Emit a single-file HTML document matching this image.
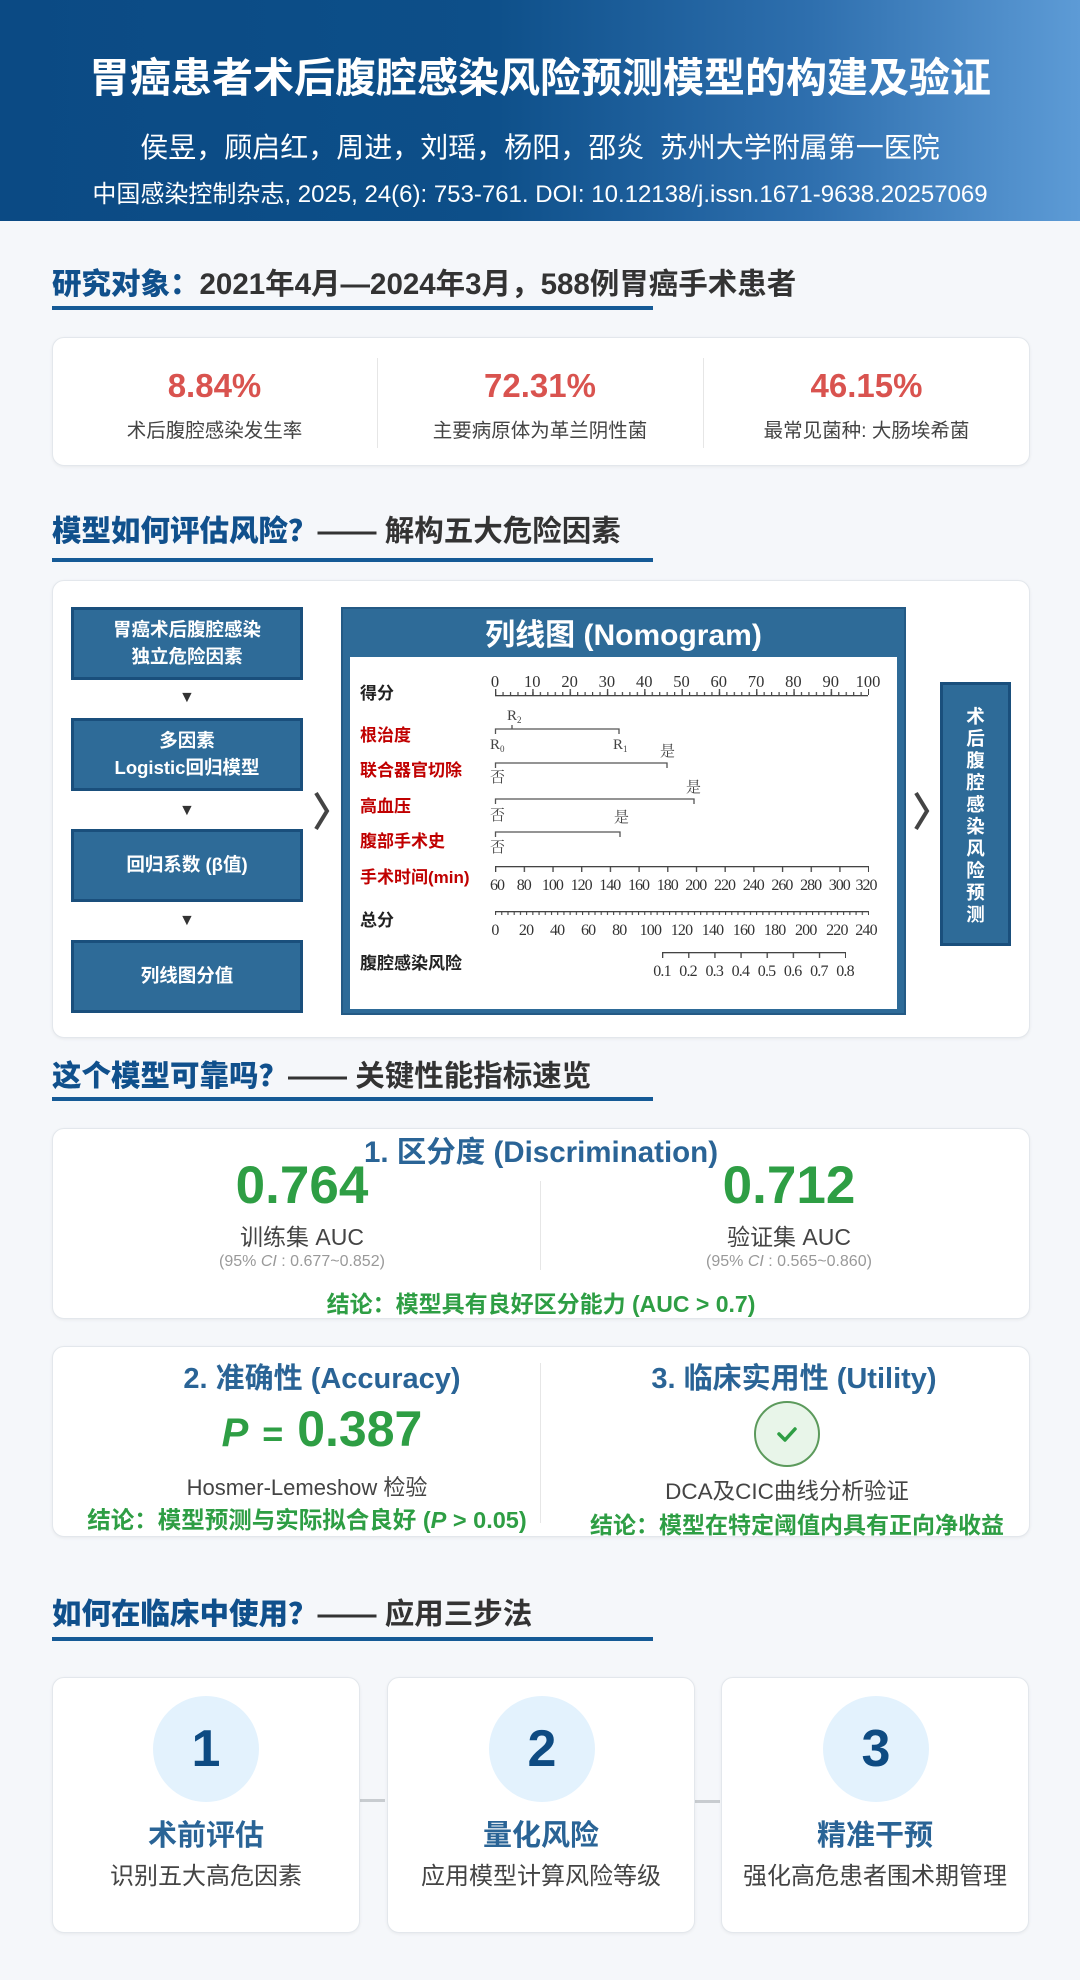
<!DOCTYPE html>
<html><head><meta charset="utf-8">
<style>
*{margin:0;padding:0;box-sizing:border-box}
body{width:1080px;height:1980px;background:#f5f7fa;font-family:"Liberation Sans","Noto Sans CJK SC",sans-serif;position:relative;overflow:hidden;color:#333}
.a{position:absolute}
.c{text-align:center}
.hdr{left:0;top:0;width:1080px;height:221px;background:linear-gradient(90deg,#0b4a84 0%,#0d4f89 45%,#2e6fae 75%,#5d9bd6 100%)}
.st{left:52px;font-size:29.5px;font-weight:bold;color:#333;white-space:nowrap}
.st b{color:#10508c}
.ul{left:52px;width:601px;height:4px;background:#155a96}
.card{background:#fff;border:1px solid #e3e7ec;border-radius:12px;box-shadow:0 1px 3px rgba(0,0,0,.06)}
.red{color:#d9534f;font-size:33px;font-weight:bold}
.lb{font-size:19.5px;color:#444}
.box{left:71px;width:232px;height:73px;background:#2e6b98;border:3px solid #1a4f7c;color:#fff;font-weight:bold;font-size:18.5px;display:flex;align-items:center;justify-content:center;text-align:center;line-height:1.45}
.tri{left:179px;font-size:16px;color:#333}
.g{color:#2e9e44;font-weight:bold}
.bt{color:#2a6496;font-weight:bold;font-size:29px}
.sc{width:308px;height:256px;top:1677px}
.circ{width:106px;height:106px;border-radius:50%;background:#e3f2fd;color:#0e4b82;font-size:52px;font-weight:bold;display:flex;align-items:center;justify-content:center}
</style></head><body>
<div class="a hdr"></div>
<div class="a c" style="left:0;width:1080px;top:44px;font-size:41px;font-weight:bold;color:#fff;white-space:nowrap">胃癌患者术后腹腔感染风险预测模型的构建及验证</div>
<div class="a c" style="left:0;width:1080px;top:126px;font-size:28px;color:#fff;white-space:nowrap">侯昱，顾启红，周进，刘瑶，杨阳，邵炎&nbsp;&nbsp;苏州大学附属第一医院</div>
<div class="a c" style="left:0;width:1080px;top:174px;font-size:24px;color:#fff;white-space:nowrap">中国感染控制杂志, 2025, 24(6): 753-761. DOI: 10.12138/j.issn.1671-9638.20257069</div>

<div class="a st" style="top:261px"><b>研究对象：</b>2021年4月—2024年3月，588例胃癌手术患者</div>
<div class="a ul" style="top:306px"></div>
<div class="a card" style="left:52px;top:337px;width:978px;height:129px"></div>
<div class="a" style="left:377px;top:358px;width:1px;height:90px;background:#e6e6e6"></div>
<div class="a" style="left:703px;top:358px;width:1px;height:90px;background:#e6e6e6"></div>
<div class="a c red" style="left:52px;width:325px;top:367px">8.84%</div>
<div class="a c lb" style="left:52px;width:325px;top:414px">术后腹腔感染发生率</div>
<div class="a c red" style="left:377px;width:326px;top:367px">72.31%</div>
<div class="a c lb" style="left:377px;width:326px;top:414px">主要病原体为革兰阴性菌</div>
<div class="a c red" style="left:703px;width:327px;top:367px">46.15%</div>
<div class="a c lb" style="left:703px;width:327px;top:414px">最常见菌种: 大肠埃希菌</div>

<div class="a st" style="top:508px"><b>模型如何评估风险？</b>—— 解构五大危险因素</div>
<div class="a ul" style="top:558px"></div>
<div class="a card" style="left:52px;top:580px;width:978px;height:458px"></div>
<div class="a box" style="top:607px">胃癌术后腹腔感染<br>独立危险因素</div>
<div class="a tri" style="top:689px">▼</div>
<div class="a box" style="top:718px">多因素<br>Logistic回归模型</div>
<div class="a tri" style="top:802px">▼</div>
<div class="a box" style="top:829px">回归系数 (β值)</div>
<div class="a tri" style="top:912px">▼</div>
<div class="a box" style="top:940px">列线图分值</div>
<svg class="a" style="left:312px;top:790px" width="20" height="42"><path d="M4 3 L15 21 L4 39" fill="none" stroke="#444" stroke-width="4"/></svg>
<svg class="a" style="left:912px;top:790px" width="20" height="42"><path d="M4 3 L15 21 L4 39" fill="none" stroke="#444" stroke-width="4"/></svg>
<div class="a" style="left:341px;top:607px;width:565px;height:408px;background:#2e6b98;border:2px solid #245a85"></div>
<div class="a c" style="left:341px;width:565px;top:610px;font-size:30px;font-weight:bold;color:#fff">列线图 (Nomogram)</div>
<div class="a" style="left:350px;top:657px;width:547px;height:352px;background:#fff"></div>
<div class="a" style="left:940px;top:682px;width:71px;height:264px;background:#2e6b98;border:3px solid #1a4f7c;color:#fff;font-weight:bold;font-size:18.5px;line-height:22px;text-align:center;padding-top:21px">术<br>后<br>腹<br>腔<br>感<br>染<br>风<br>险<br>预<br>测</div>

<svg class="a" style="left:350px;top:657px" width="547" height="352" viewBox="350 657 547 352">
<defs>
<pattern id="p1" x="495" y="0" width="7.46" height="10" patternUnits="userSpaceOnUse"><rect x="0" y="0" width="1.2" height="10" fill="#444"/></pattern>
<pattern id="p2" x="495" y="0" width="37.3" height="10" patternUnits="userSpaceOnUse"><rect x="0" y="0" width="1.3" height="10" fill="#444"/></pattern>
<pattern id="p3" x="495" y="0" width="28.69" height="10" patternUnits="userSpaceOnUse"><rect x="0" y="0" width="1.3" height="10" fill="#444"/></pattern>
<pattern id="p4" x="495" y="0" width="6.216" height="10" patternUnits="userSpaceOnUse"><rect x="0" y="0" width="1.1" height="10" fill="#444"/></pattern>
<pattern id="p5" x="662" y="0" width="26.14" height="10" patternUnits="userSpaceOnUse"><rect x="0" y="0" width="1.3" height="10" fill="#444"/></pattern>
</defs>
<g font-family="Liberation Sans,Noto Sans CJK SC,sans-serif" font-weight="bold" font-size="17">
<text x="360" y="699" fill="#222">得分</text>
<text x="360" y="741" fill="#c00000">根治度</text>
<text x="360" y="776" fill="#c00000">联合器官切除</text>
<text x="360" y="812" fill="#c00000">高血压</text>
<text x="360" y="847" fill="#c00000">腹部手术史</text>
<text x="360" y="883" fill="#c00000">手术时间(min)</text>
<text x="360" y="926" fill="#222">总分</text>
<text x="360" y="969" fill="#222">腹腔感染风险</text>
</g>
<rect x="495" y="695" width="373" height="1.3" fill="#444"/>
<rect x="495" y="692" width="374" height="3" fill="url(#p1)"/>
<rect x="495" y="689" width="374" height="6" fill="url(#p2)"/>
<g font-family="Liberation Serif,serif" font-size="16.5" fill="#333" text-anchor="middle">
<text x="495" y="687">0</text><text x="532.3" y="687">10</text><text x="569.6" y="687">20</text><text x="606.9" y="687">30</text><text x="644.2" y="687">40</text><text x="681.5" y="687">50</text><text x="718.8" y="687">60</text><text x="756.1" y="687">70</text><text x="793.4" y="687">80</text><text x="830.7" y="687">90</text><text x="868" y="687">100</text>
</g>
<g fill="none" stroke="#555" stroke-width="1.3">
<path d="M495.5 734 V729 H619 V734 M512 729 V725"/>
<path d="M495.5 768 V763 H667 V768"/>
<path d="M495.5 804 V799 H694 V804"/>
<path d="M495.5 837 V832 H620 V837"/>
</g>
<g font-family="Liberation Serif,Noto Serif CJK SC,serif" font-size="15" fill="#444">
<text x="507" y="720">R<tspan font-size="9" dy="3">2</tspan></text>
<text x="490" y="749">R<tspan font-size="9" dy="3">0</tspan></text>
<text x="613" y="749">R<tspan font-size="9" dy="3">1</tspan></text>
<text x="660" y="756">是</text><text x="490" y="782">否</text>
<text x="686" y="792">是</text><text x="490" y="820">否</text>
<text x="614" y="822">是</text><text x="490" y="852">否</text>
</g>
<rect x="495" y="866" width="373" height="1.3" fill="#444"/>
<rect x="495" y="866" width="374" height="6" fill="url(#p3)"/>
<g font-family="Liberation Serif,serif" font-size="16" fill="#333" text-anchor="middle" letter-spacing="-1">
<text x="497" y="890">60</text><text x="523.7" y="890">80</text><text x="552.4" y="890">100</text><text x="581.1" y="890">120</text><text x="609.8" y="890">140</text><text x="638.5" y="890">160</text><text x="667.2" y="890">180</text><text x="695.8" y="890">200</text><text x="724.5" y="890">220</text><text x="753.2" y="890">240</text><text x="781.9" y="890">260</text><text x="810.6" y="890">280</text><text x="839.3" y="890">300</text><text x="866" y="890">320</text>
</g>
<rect x="495" y="911" width="373" height="1.3" fill="#444"/>
<rect x="495" y="911" width="374" height="4" fill="url(#p4)"/>
<g font-family="Liberation Serif,serif" font-size="16" fill="#333" text-anchor="middle" letter-spacing="-0.8">
<text x="495" y="935">0</text><text x="526.1" y="935">20</text><text x="557.2" y="935">40</text><text x="588.2" y="935">60</text><text x="619.3" y="935">80</text><text x="650.4" y="935">100</text><text x="681.5" y="935">120</text><text x="712.6" y="935">140</text><text x="743.6" y="935">160</text><text x="774.7" y="935">180</text><text x="805.8" y="935">200</text><text x="836.9" y="935">220</text><text x="866" y="935">240</text>
</g>
<rect x="662" y="952" width="183" height="1.3" fill="#444"/>
<rect x="662" y="952" width="184" height="6" fill="url(#p5)"/>
<g font-family="Liberation Serif,serif" font-size="16" fill="#333" text-anchor="middle" letter-spacing="-0.8">
<text x="662" y="976">0.1</text><text x="688.1" y="976">0.2</text><text x="714.3" y="976">0.3</text><text x="740.4" y="976">0.4</text><text x="766.6" y="976">0.5</text><text x="792.7" y="976">0.6</text><text x="818.9" y="976">0.7</text><text x="845" y="976">0.8</text>
</g>
</svg>

<div class="a st" style="top:1053px"><b>这个模型可靠吗？</b>—— 关键性能指标速览</div>
<div class="a ul" style="top:1097px"></div>
<div class="a card" style="left:52px;top:1128px;width:978px;height:191px"></div>
<div class="a" style="left:540px;top:1181px;width:1px;height:89px;background:#e6e6e6"></div>
<div class="a c bt" style="left:52px;width:978px;top:1129px;font-size:29.5px">1. 区分度 (Discrimination)</div>
<div class="a c g" style="left:152px;width:300px;top:1155px;font-size:53px">0.764</div>
<div class="a c" style="left:152px;width:300px;top:1218px;font-size:23px;color:#444">训练集 AUC</div>
<div class="a c" style="left:152px;width:300px;top:1253px;font-size:16px;color:#999">(95% <i>CI</i> : 0.677~0.852)</div>
<div class="a c g" style="left:639px;width:300px;top:1155px;font-size:53px">0.712</div>
<div class="a c" style="left:639px;width:300px;top:1218px;font-size:23px;color:#444">验证集 AUC</div>
<div class="a c" style="left:639px;width:300px;top:1253px;font-size:16px;color:#999">(95% <i>CI</i> : 0.565~0.860)</div>
<div class="a c g" style="left:52px;width:978px;top:1285px;font-size:23px">结论：模型具有良好区分能力 (AUC &gt; 0.7)</div>

<div class="a card" style="left:52px;top:1346px;width:978px;height:191px"></div>
<div class="a" style="left:540px;top:1363px;width:1px;height:160px;background:#e6e6e6"></div>
<div class="a c bt" style="left:122px;width:400px;top:1355px">2. 准确性 (Accuracy)</div>
<div class="a c g" style="left:122px;width:400px;top:1400px;font-size:50px"><i style="font-size:40px">P</i> <span style="font-size:36px">=</span> 0.387</div>
<div class="a c" style="left:107px;width:400px;top:1470px;font-size:22px;color:#444">Hosmer-Lemeshow 检验</div>
<div class="a c g" style="left:32px;width:550px;top:1501px;font-size:23.5px;white-space:nowrap">结论：模型预测与实际拟合良好 (<i>P</i> &gt; 0.05)</div>
<div class="a c bt" style="left:594px;width:400px;top:1355px">3. 临床实用性 (Utility)</div>
<div class="a" style="left:754px;top:1401px;width:66px;height:66px;border-radius:50%;background:#e8f5e9;border:2px solid #5c9a5c"></div>
<svg class="a" style="left:770px;top:1418px" width="34" height="32"><path d="M9 16 L15 22 L25 11" fill="none" stroke="#2e9e44" stroke-width="3.5" stroke-linecap="round" stroke-linejoin="round"/></svg>
<div class="a c" style="left:587px;width:400px;top:1474px;font-size:22.5px;color:#444">DCA及CIC曲线分析验证</div>
<div class="a c g" style="left:522px;width:550px;top:1506px;font-size:23px;white-space:nowrap">结论：模型在特定阈值内具有正向净收益</div>

<div class="a st" style="top:1591px"><b>如何在临床中使用？</b>—— 应用三步法</div>
<div class="a ul" style="top:1637px"></div>
<div class="a" style="left:360px;top:1799px;width:25px;height:3px;background:#c8ccd0"></div>
<div class="a" style="left:695px;top:1800px;width:25px;height:3px;background:#c8ccd0"></div>
<div class="a card sc" style="left:52px"></div>
<div class="a card sc" style="left:387px"></div>
<div class="a card sc" style="left:721px"></div>
<div class="a circ" style="left:153px;top:1696px">1</div>
<div class="a circ" style="left:489px;top:1696px">2</div>
<div class="a circ" style="left:823px;top:1696px">3</div>
<div class="a c" style="left:52px;width:308px;top:1812px;font-size:29px;font-weight:bold;color:#2a6496">术前评估</div>
<div class="a c" style="left:52px;width:308px;top:1856px;font-size:24px;color:#444">识别五大高危因素</div>
<div class="a c" style="left:387px;width:308px;top:1812px;font-size:29px;font-weight:bold;color:#2a6496">量化风险</div>
<div class="a c" style="left:387px;width:308px;top:1856px;font-size:24px;color:#444">应用模型计算风险等级</div>
<div class="a c" style="left:721px;width:308px;top:1812px;font-size:29px;font-weight:bold;color:#2a6496">精准干预</div>
<div class="a c" style="left:721px;width:308px;top:1856px;font-size:24px;color:#444">强化高危患者围术期管理</div>
</body></html>
